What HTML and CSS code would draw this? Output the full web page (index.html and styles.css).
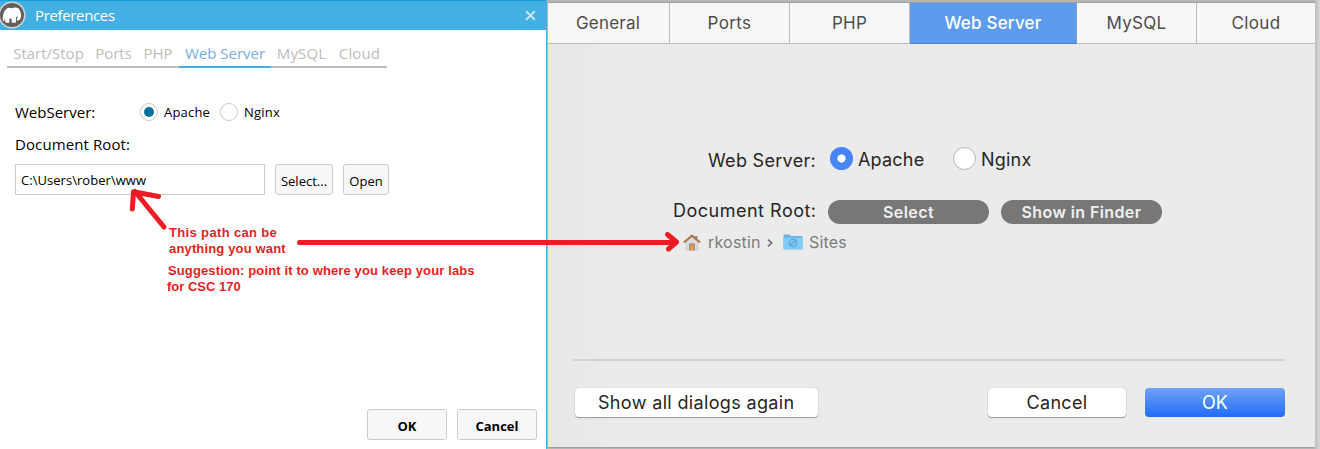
FILE: index.html
```html
<!DOCTYPE html>
<html lang="en">
<head>
<meta charset="utf-8">
<title>Preferences</title>
<link rel="stylesheet" href="styles.css">
</head>
<body>
<main class="stage">
  <section class="win">
    <header class="win-title">
      <svg class="logo" width="27" height="29" viewBox="0 0 27 29">
        <circle cx="12" cy="14" r="13.5" fill="#d7d3d0"/>
        <circle cx="12" cy="14" r="12" fill="#625f5d"/>
        <path d="M3 20C2.2 13 5 6.8 9.2 6.7c1.500 0 2.500.8 3.700.3 3.200-1 5.500-.2 6.600 1.800 1.500 2.600 1.900 5.400 1.300 7.800-.5 2.300-2.300 3.500-3.700 2.800-.9-.6-.1-1.500.3-2.300.3-.6.2-1.500-.1-2.100l-1.300 1.400-.2 5.400h-3.900l-.5-4.200H9.500l-.3 4.200H5.500l-.7-4.600-.6 3z" fill="#fff"/>
      </svg>
      <h1 class="win-name">Preferences</h1>
      <svg class="close" width="11" height="11" viewBox="0 0 11 11"><path d="M1.2 1.2l8.6 8.6M9.8 1.2L1.2 9.8" stroke="#c6e7f6" stroke-width="2"/></svg>
    </header>
    <nav class="win-tabs">
      <span class="wt wt-start">Start/Stop</span><span class="wt wt-ports">Ports</span><span class="wt wt-php">PHP</span><span class="wt wt-web active">Web Server</span><span class="wt wt-mysql">MySQL</span><span class="wt wt-cloud">Cloud</span>
    </nav>
    <div class="server-row">
      <span class="label server-label">WebServer:</span>
      <span class="w-radio checked"></span><span class="radio-text apache">Apache</span>
      <span class="w-radio"></span><span class="radio-text nginx">Nginx</span>
    </div>
    <div class="label root-label">Document Root:</div>
    <div class="path-row">
      <div class="path">C:\Users\rober\www</div>
      <button class="w-btn select">Select...</button>
      <button class="w-btn open">Open</button>
    </div>
    <div class="notes">
      <p class="note n1">This path can be</p>
      <p class="note n2">anything you want</p>
      <p class="note n3">Suggestion: point it to where you keep your labs</p>
      <p class="note n4">for CSC 170</p>
    </div>
    <footer class="win-actions"><button class="w-btn strong ok">OK</button><button class="w-btn strong cancel">Cancel</button></footer>
  </section>

  <section class="mac">
    <div class="mac-panel">
      <nav class="mac-tabs">
        <span class="mt general">General</span><span class="mt ports">Ports</span><span class="mt php">PHP</span><span class="mt web">Web Server</span><span class="mt mysql">MySQL</span><span class="mt cloud">Cloud</span>
      </nav>
      <div class="mac-server">
        <span class="m-label m-web">Web Server:</span>
        <span class="m-radio on"></span><span class="m-text m-apache">Apache</span>
        <span class="m-radio"></span><span class="m-text m-nginx">Nginx</span>
      </div>
      <div class="mac-root">
        <span class="m-label m-root">Document Root:</span>
        <button class="pill p-select">Select</button>
        <button class="pill p-finder">Show in Finder</button>
      </div>
      <div class="crumbs">
        <svg class="house" width="18" height="17" viewBox="0 0 18 17">
          <path d="M3.2 8v8.2h11.6V8L9 3z" fill="#dedcdc" stroke="#bbb8b7" stroke-width=".6"/>
          <path d="M12.2 2h2.1v4h-2.1z" fill="#a87958"/>
          <path d="M.9 8.5L9 1.5l8.1 7" fill="none" stroke="#a8754c" stroke-width="2"/>
          <path d="M6.3 9.5h5.4v6.7H6.3z" fill="#77716f"/>
          <path d="M7.1 10.2h3.8v6H7.1z" fill="#e59a4a"/>
        </svg>
        <span class="crumb user">rkostin</span>
        <svg class="chev" width="6" height="8" viewBox="0 0 6 8"><path d="M1 .7L4.7 4 1 7.3" fill="none" stroke="#6d6d6d" stroke-width="1.6"/></svg>
        <svg class="folder" width="20" height="16" viewBox="0 0 20 16">
          <path d="M.5 1.5q0-1 1-1h5l1.3 1.4h10.7q1 0 1 1v11.6q0 1-1 1h-17q-1 0-1-1z" fill="#67b8e4"/>
          <path d="M.5 4h19v10.3q0 .7-1 .7h-17q-1 0-1-.7z" fill="#82cdf5"/>
          <circle cx="10" cy="9" r="3.9" fill="none" stroke="#529fcb" stroke-width="1"/>
          <path d="M12.3 6.7l-1.5 3.1-3.1 1.5 1.5-3.1z" fill="none" stroke="#529fcb" stroke-width=".9"/>
        </svg>
        <span class="crumb sites">Sites</span>
      </div>
      <div class="rule"></div>
      <footer class="mac-actions"><button class="m-btn again">Show all dialogs again</button><button class="m-btn m-cancel">Cancel</button><button class="m-btn m-ok">OK</button></footer>
    </div>
  </section>
  <svg class="arrows" width="1320" height="449" viewBox="0 0 1320 449">
    <g fill="none" stroke="#ed1c24" stroke-width="5" stroke-linecap="round" stroke-linejoin="round">
      <path d="M164 227L135 191.5M132.3 209l1.2-17.2L158.5 196.5"/>
      <path d="M299.500 242.500H676M667.500 234.500l9 7.500-8 7"/>
    </g>
  </svg>
</main>
</body>
</html>
```
FILE: styles.css
```css
* { box-sizing: border-box; }
body { margin: 0; overflow: hidden; }
button { margin: 0; padding: 0; display: block; font: inherit; flex: none; white-space: nowrap; }
svg { display: block; flex: none; }
.stage { position: relative; display: flex; width: 1320px; height: 449px; }
.arrows { position: absolute; left: 0; top: 0; pointer-events: none; }

.win { width: 547px; height: 449px; flex: none; background: #fff; border-right: 1px solid #42b0e2; font: 14px/20px "Open Sans", sans-serif; color: #000; display: flex; flex-direction: column; }
.win-title { height: 30px; flex: none; display: flex; align-items: flex-start; background: #42b0e2; border-top: 1px solid #1a9ddb; }
.logo { width: 27px; }
.win-name { margin: 4px 0 0 8px; width: 90px; font-size: 15px; line-height: 20px; font-weight: 400; color: #fff; letter-spacing: -.6px; letter-spacing: -.35px; }
.close { margin: 9px 0 0 399.5px; }
.win-tabs { display: flex; flex: none; margin: 10px 0 0 7px; height: 28px; width: 380px; }
.wt { flex: none; text-align: center; font-size: 15px; line-height: 27px; color: #bdbdbd; border-bottom: 2px solid #bdbdbd; white-space: nowrap; }
.wt-start { width: 83px; }
.wt-ports { width: 47px; }
.wt-php { width: 42px; }
.wt-web { width: 92px; }
.wt-mysql { width: 62px; padding-right: 1px; letter-spacing: .15px; }
.wt-cloud { width: 54px; padding-right: 1px; letter-spacing: .15px; }
.wt.active { color: #78afe0; border-color: #42b0e2; }
.label { font-size: 15px; white-space: nowrap; }
.server-row { display: flex; align-items: center; flex: none; height: 20px; margin: 34px 0 0 15px; }
.server-label { width: 125px; }
.w-radio { width: 18px; height: 18px; flex: none; border: 1px solid #ccc; border-radius: 50%; display: grid; place-items: center; }
.w-radio.checked::after { content: ""; width: 10px; height: 10px; border-radius: 50%; background: #08709f; }
.radio-text { margin-left: 6px; font-size: 13px; letter-spacing: .2px; white-space: nowrap; }
.apache { width: 56px; }
.root-label { flex: none; margin: 12px 0 0 15px; letter-spacing: .1px; }
.path-row { display: flex; gap: 10px; flex: none; margin: 10px 0 0 15px; }
.path { width: 250px; height: 31px; border: 1px solid #ccc; padding-left: 5px; line-height: 31px; font-size: 13px; letter-spacing: .04px; }
.w-btn { height: 31px; border: 1px solid #ccc; border-radius: 3px; background: #f7f7f7; color: #000; font-size: 13px; line-height: 32px; }
.select { width: 58px; }
.open { width: 46px; }
.notes { flex: none; margin: 30px 0 0 167px; height: 71px; font: bold 13px/16px "Liberation Sans", sans-serif; color: #ed1c24; }
.note { margin: 0; white-space: nowrap; }
.n1, .n2 { padding-left: 2px; }
.n1 { letter-spacing: .35px; }
.n2 { letter-spacing: .16px; }
.n3 { padding-left: 1px; margin-top: 6px; letter-spacing: .13px; }
.win-actions { display: flex; gap: 10px; margin: 113px 0 0 367px; }
.strong { width: 80px; font-weight: 700; }

.mac { width: 773px; height: 449px; flex: none; background: linear-gradient(90deg, #bdbdbd, #d8d8d8 5px) right / 5px 100% no-repeat, #b5b5b5; padding: 3px 5px 2px 1px; }
.mac-panel { width: 767px; height: 444px; background: linear-gradient(90deg, #e7e7e7, #ebebeb 70px); font: 18px/24px Inter, sans-serif; color: #262626; box-shadow: 0 -1px #a0a0a0, 0 1px #a0a0a0; display: flex; flex-direction: column; }
.mac-tabs { display: flex; flex: none; height: 41px; }
.mt { flex: none; display: block; text-align: center; line-height: 41px; background: #f7f7f7; border-bottom: 1px solid #bdbdbd; border-right: 1px solid #bdbdbd; color: #4d4d4d; white-space: nowrap; font-size: 17px; letter-spacing: .2px; }
.general { width: 122px; padding-right: 1px; }
.ports, .php, .mysql { width: 120px; }
.ports { letter-spacing: .4px; }
.mysql { letter-spacing: .3px; }
.web { width: 167px; background: #5d9cec; border-right-color: #7f9fc6; border-bottom-color: #4b83cc; color: #fff; font-weight: 500; }
.cloud { width: 118px; border-right: 0; letter-spacing: .4px; }
.mac-server { display: flex; flex: none; height: 24px; margin: 104px 0 0 160px; align-items: flex-start; }
.m-label, .m-text { white-space: nowrap; }
.m-web { margin-top: 1px; width: 122px; letter-spacing: .3px; }
.m-radio { width: 23px; height: 23px; flex: none; border-radius: 50%; background: #fff; border: 1px solid #b4b4b4; margin-top: -1px; }
.m-radio.on { background: radial-gradient(circle, #fff 3.7px, #4784f5 4.5px); border: 0; }
.m-text { margin-left: 5px; letter-spacing: .2px; }
.m-apache { width: 95px; }
.mac-root { display: flex; flex: none; height: 24px; margin: 28px 0 0 125px; }
.m-root { width: 155px; margin-top: -1px; letter-spacing: .5px; }
.pill { width: 161px; height: 24px; border: 0; border-radius: 12px; background: #777; color: #f0f0f0; font-size: 16px; line-height: 22px; font-weight: 600; letter-spacing: .4px; }
.p-finder { margin-left: 12px; }
.crumbs { display: flex; align-items: flex-start; flex: none; height: 24px; margin: 7px 0 0 135px; font-size: 16px; color: #7b7b7b; }
.crumb { margin-top: -1px; letter-spacing: .2px; }
.house { margin-top: 3px; }
.user { margin-left: 7px; width: 59px; }
.chev { margin-top: 8px; }
.folder { margin: 3px 0 0 10px; }
.sites { margin-left: 6px; }
.rule { flex: none; width: 712px; height: 2px; margin: 104px 0 0 25px; background: #d2d2d2; }
.mac-actions { display: flex; flex: none; margin: 27px 0 0 26.5px; }
.m-btn { height: 29px; border: 0; border-radius: 4px; background: #fff; color: #262626; line-height: 30px; letter-spacing: .35px; box-shadow: 0 0 1px #999, 0 1px 1px #999; }
.again { width: 243.5px; }
.m-cancel { width: 138px; margin-left: 170px; }
.m-ok { width: 140px; margin-left: 19px; background: linear-gradient(#6fa3f6, #216bf7); color: #fff; box-shadow: none; letter-spacing: 0; }
```
